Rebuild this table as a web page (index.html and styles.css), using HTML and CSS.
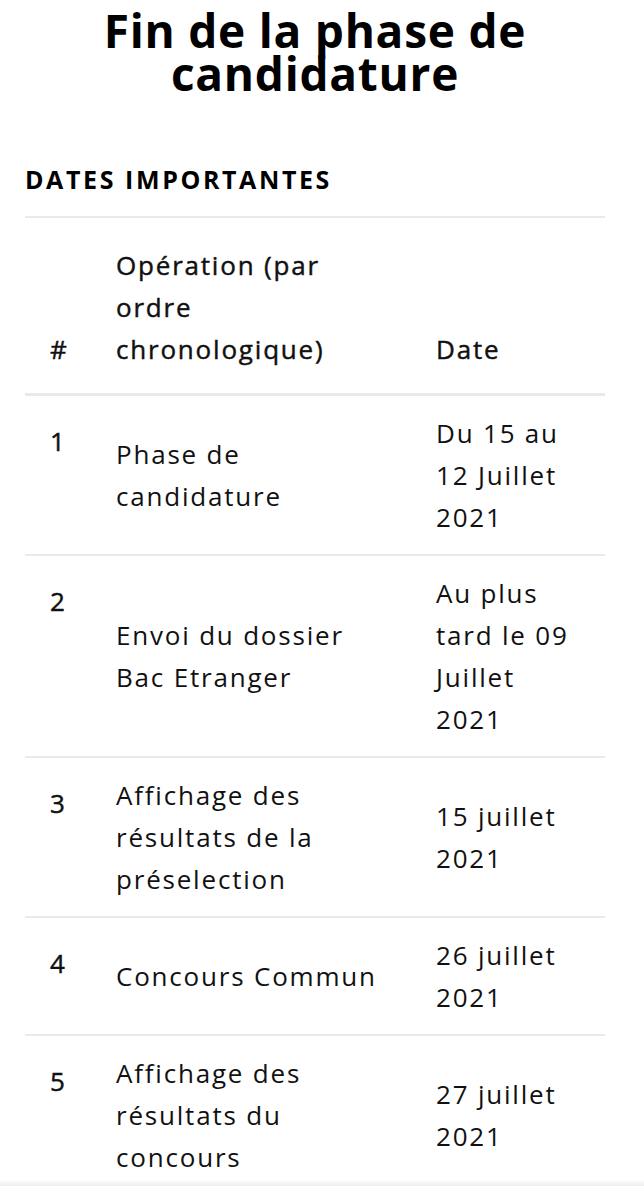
FILE: index.html
```html
<!DOCTYPE html>
<html lang="fr">
<head>
<meta charset="utf-8">
<title>Fin de la phase de candidature</title>
<link rel="stylesheet" href="styles.css">
</head>
<body>
<main class="page">
  <h1 class="title">Fin de la phase de candidature</h1>
  <h2 class="section-title">DATES IMPORTANTES</h2>
  <table class="dates">
    <colgroup>
      <col class="col-num">
      <col class="col-op">
      <col class="col-date">
    </colgroup>
    <thead>
      <tr>
        <th class="num">#</th>
        <th>Opération (par ordre chronologique)</th>
        <th>Date</th>
      </tr>
    </thead>
    <tbody>
      <tr>
        <th class="num" scope="row">1</th>
        <td>Phase de candidature</td>
        <td>Du 15 au 12 Juillet 2021</td>
      </tr>
      <tr>
        <th class="num" scope="row">2</th>
        <td>Envoi du dossier Bac Etranger</td>
        <td>Au plus tard le 09 Juillet 2021</td>
      </tr>
      <tr>
        <th class="num" scope="row">3</th>
        <td>Affichage des résultats de la préselection</td>
        <td>15 juillet 2021</td>
      </tr>
      <tr>
        <th class="num" scope="row">4</th>
        <td>Concours Commun</td>
        <td>26 juillet 2021</td>
      </tr>
      <tr>
        <th class="num" scope="row">5</th>
        <td>Affichage des résultats du concours</td>
        <td>27 juillet 2021</td>
      </tr>
    </tbody>
  </table>
</main>
<div class="bottom-shadow"></div>
</body>
</html>
```

FILE: styles.css
```css
html, body {
  margin: 0;
  padding: 0;
  background: #ffffff;
}

body {
  font-family: "Open Sans", "Noto Sans", sans-serif;
  color: #111111;
}

.page {
  width: 580px;
  margin: 0 0 0 25px;
  padding-top: 9px;
}

.title {
  margin: 0;
  font-size: 46px;
  line-height: 43px;
  font-weight: 700;
  letter-spacing: 0.75px;
  text-align: center;
  color: #000000;
}

.section-title {
  margin: 70px 0 23px 0;
  font-size: 25px;
  line-height: 28px;
  font-weight: 700;
  letter-spacing: 2.6px;
  color: #000000;
}

.dates {
  width: 580px;
  border-collapse: collapse;
  table-layout: fixed;
  font-size: 26px;
  line-height: 42px;
  letter-spacing: 1.8px;
}

.col-num { width: 66px; }
.col-op { width: 320px; }
.col-date { width: 194px; }

.dates th,
.dates td {
  padding: 16px 25px;
  text-align: left;
  vertical-align: middle;
}

.dates thead th {
  font-weight: 400;
  -webkit-text-stroke: 0.45px currentColor;
  vertical-align: bottom;
  padding-top: 26px;
  padding-bottom: 23px;
  border-top: 2px solid #e9e9e9;
  border-bottom: 3px solid #e9e9e9;
}

.dates tbody th {
  font-weight: 400;
  -webkit-text-stroke: 0.45px currentColor;
}

.dates tbody td {
  font-weight: 400;
}

.dates tbody tr + tr {
  border-top: 2px solid #e9e9e9;
}

.dates tbody .num {
  vertical-align: top;
  padding-top: 24px;
  letter-spacing: 0;
}

.bottom-shadow {
  position: fixed;
  left: 0;
  right: 0;
  bottom: 0;
  height: 6px;
  background: linear-gradient(to bottom, rgba(0, 0, 0, 0), rgba(0, 0, 0, 0.07));
}
```
